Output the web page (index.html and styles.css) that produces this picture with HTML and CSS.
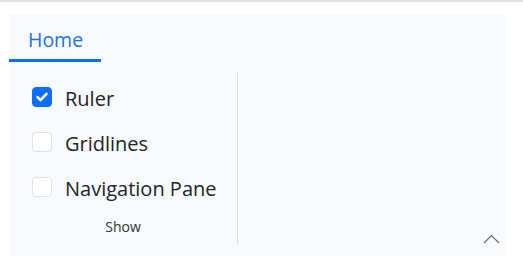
FILE: index.html
```html
<!DOCTYPE html>
<html lang="en">
<head>
    <meta charset="UTF-8">
    <title>Ribbon</title>
    <link rel="stylesheet" href="styles.css">
</head>
<body>
    <div class="topline"></div>
    <div class="ribbon">
        <div class="tabs">
            <div class="tab active">Home</div>
        </div>
        <div class="content">
            <div class="group">
                <label class="check-row">
                    <span class="box checked">
                        <svg width="20" height="20" viewBox="0 0 20 20"><path d="M5.5 10.2l3 3 6-6.4" fill="none" stroke="#fff" stroke-width="2.6" stroke-linecap="round" stroke-linejoin="round"/></svg>
                    </span>
                    <span class="label-text">Ruler</span>
                </label>
                <label class="check-row">
                    <span class="box"></span>
                    <span class="label-text">Gridlines</span>
                </label>
                <label class="check-row">
                    <span class="box"></span>
                    <span class="label-text">Navigation Pane</span>
                </label>
                <div class="group-title">Show</div>
            </div>
        </div>
        <button class="collapse" title="Collapse">
            <svg width="17" height="10" viewBox="0 0 17 10"><path d="M1 9l7.5-7.5L16 9" fill="none" stroke="#6c6c6c" stroke-width="1.2"/></svg>
        </button>
    </div>
</body>
</html>
```
FILE: styles.css
```css
body {
    margin: 0;
    font-family: "Open Sans", "Noto Sans", sans-serif;
    color: #212529;
    background: #fff;
}
.topline {
    height: 2px;
    background-color: #e3e3e3;
}
.ribbon {
    position: relative;
    margin: 12px 18px 0 9px;
    height: 242px;
    background-color: #f8f9fa;
}
.tabs {
    display: flex;
    height: 48px;
}
.tab {
    width: 92px;
    box-sizing: border-box;
    padding: 12px 0 0 19px;
    font-size: 19.5px;
    color: #1a73e8;
}
.tab.active {
    border-bottom: 3px solid #0d6efd;
}
.content {
    display: flex;
    margin-top: 11px;
}
.group {
    width: 229px;
    height: 172px;
    box-sizing: border-box;
    padding: 1px 0 0 23px;
    border-right: 1px solid #dcdcdc;
}
.check-row {
    display: flex;
    align-items: center;
    height: 45px;
    font-size: 20px;
    cursor: pointer;
}
.label-text {
    margin-top: 3px;
}
.box {
    display: inline-flex;
    width: 20px;
    height: 20px;
    box-sizing: border-box;
    margin-right: 13px;
    border: 1px solid #dee2e6;
    border-radius: 4px;
    background-color: #fff;
}
.box.checked {
    border-color: #0d6efd;
    background-color: #0d6efd;
}
.box.checked svg {
    margin: -1px;
}
.group-title {
    margin: 8px 0 0 -23px;
    text-align: center;
    font-size: 14px;
    color: #333;
}
.collapse {
    position: absolute;
    right: 5px;
    bottom: 12px;
    padding: 0;
    border: none;
    background: none;
    line-height: 0;
}
```
